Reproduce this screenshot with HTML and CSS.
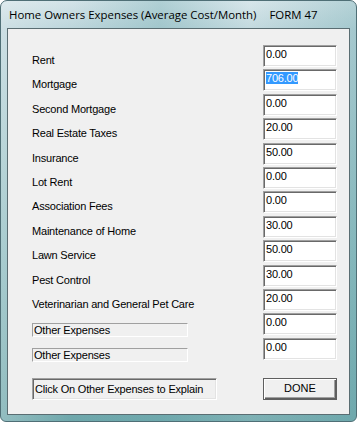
FILE: index.html
```html
<!DOCTYPE html>
<html>
<head>
<meta charset="utf-8">
<link rel="stylesheet" href="styles.css">
</head>
<body>
<div class="window">
  <div class="titlebar">
    <span class="title">Home Owners Expenses (Average Cost/Month)</span>
    <span class="title">FORM 47</span>
  </div>
  <div class="client">
    <div class="grid">
      <div class="label">Rent</div><div class="field">0.00</div>
      <div class="label">Mortgage</div><div class="field"><span class="sel">706.00</span></div>
      <div class="label">Second Mortgage</div><div class="field">0.00</div>
      <div class="label">Real Estate Taxes</div><div class="field">20.00</div>
      <div class="label">Insurance</div><div class="field">50.00</div>
      <div class="label">Lot Rent</div><div class="field">0.00</div>
      <div class="label">Association Fees</div><div class="field">0.00</div>
      <div class="label">Maintenance of Home</div><div class="field">30.00</div>
      <div class="label">Lawn Service</div><div class="field">50.00</div>
      <div class="label">Pest Control</div><div class="field">30.00</div>
      <div class="label">Veterinarian and General Pet Care</div><div class="field">20.00</div>
      <div class="other-cell"><div class="other">Other Expenses</div></div><div class="field">0.00</div>
      <div class="other-cell"><div class="other">Other Expenses</div></div><div class="field">0.00</div>
    </div>
    <div class="bottom">
      <div class="hint">Click On Other Expenses to Explain</div>
      <div class="button">DONE</div>
    </div>
  </div>
</div>
</body>
</html>
```
FILE: styles.css
```css
html, body {
  margin: 0;
  padding: 0;
  background: #ffffff;
}
.window {
  width: 357px;
  height: 422px;
  box-sizing: border-box;
  border: 1px solid #4f6f76;
  border-radius: 7px 7px 6px 6px;
  padding: 0 6px 6px 6px;
  display: flex;
  flex-direction: column;
  background:
    linear-gradient(to right, rgba(255,255,255,0.25) 0, rgba(255,255,255,0) 20%, rgba(110,170,175,0.35) 45%, rgba(255,255,255,0.1) 70%, rgba(110,170,175,0.3) 100%),
    linear-gradient(to bottom, #d3e3e8 0, #bcd5db 28px, #8dbcc0 60%, #6ea7ab 100%);
}
.titlebar {
  height: 27px;
  display: flex;
  align-items: center;
  gap: 13px;
  padding-left: 2px;
  font-family: "Open Sans", "Noto Sans", sans-serif;
  font-size: 11.4px;
  color: #000;
}
.client {
  flex: 1;
  background: #f0f0f0;
  border: 1px solid #5a6d72;
  padding: 16px 12px 0 24px;
  font-family: "Liberation Sans", Arial, sans-serif;
  font-size: 11px;
  letter-spacing: -0.2px;
  color: #000;
}
.grid {
  display: grid;
  grid-template-columns: 1fr 74px;
  grid-auto-rows: 22px;
  row-gap: 2.4px;
}
.label {
  padding-top: 9px;
  line-height: 13px;
  white-space: nowrap;
}
.field {
  box-sizing: border-box;
  height: 22px;
  background: #ffffff;
  border: 1px solid;
  border-color: #a0a0a0 #ffffff #ffffff #a0a0a0;
  box-shadow: inset 1px 1px 0 #696969, inset -1px -1px 0 #e3e3e3;
  padding: 2px 0 0 2px;
  line-height: 13px;
}
.sel {
  background: #3399ff;
  color: #ffffff;
}
.other-cell {
  padding-top: 10px;
}
.other {
  box-sizing: border-box;
  width: 156px;
  height: 14px;
  border: 1px solid;
  border-color: #a0a0a0 #ffffff #ffffff #a0a0a0;
  line-height: 12px;
  padding-left: 1px;
  white-space: nowrap;
}
.bottom {
  display: flex;
  justify-content: space-between;
  margin-top: 18px;
}
.hint {
  box-sizing: border-box;
  width: 185px;
  height: 22px;
  border: 1px solid;
  border-color: #a0a0a0 #ffffff #ffffff #a0a0a0;
  box-shadow: inset 1px 1px 0 #696969, inset -1px -1px 0 #e3e3e3;
  padding: 4px 0 0 2px;
  line-height: 13px;
  white-space: nowrap;
}
.button {
  box-sizing: border-box;
  width: 74px;
  height: 22px;
  border: 1px solid #5f5f5f;
  box-shadow: inset 1px 1px 0 #ffffff, inset -1px -1px 0 #5f5f5f, inset -2px -2px 0 #a0a0a0;
  display: flex;
  align-items: center;
  justify-content: center;
  line-height: 13px;
  letter-spacing: 0;
}
```
